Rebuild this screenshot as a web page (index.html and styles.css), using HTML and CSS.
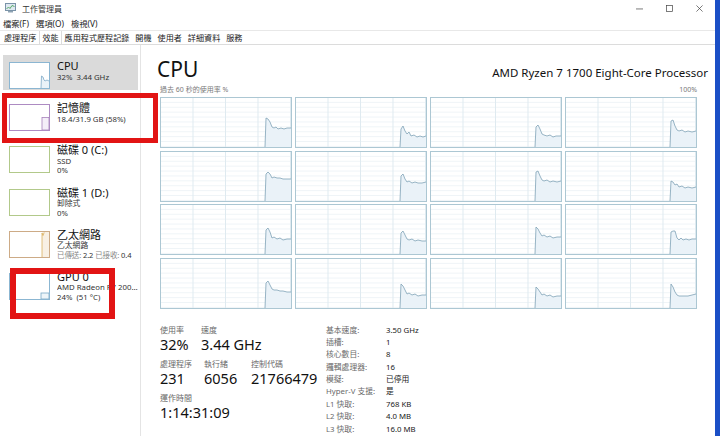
FILE: index.html
```html
<!DOCTYPE html>
<html lang="zh-Hant">
<head>
<meta charset="utf-8">
<title>工作管理員</title>
<link rel="stylesheet" href="styles.css">
</head>
<body>
<div class="screen">
  <div class="window">
    <div class="titlebar">
      <svg class="appicon" viewBox="0 0 11 10"><rect x="0.5" y="0.5" width="10" height="7" fill="#dfe9f1" stroke="#7a93a8"/><polyline points="1.5,6 3.5,4 5,5.5 7,2.5 9.5,3.5" fill="none" stroke="#4aa35a" stroke-width="0.9"/><rect x="3" y="8" width="5" height="1.5" fill="#8fa3b3"/></svg>
      <span class="title">工作管理員</span>
      <div class="controls">
        <svg viewBox="0 0 8 8"><line x1="0" y1="4.5" x2="8" y2="4.5" stroke="#444" stroke-width="0.8"/></svg>
        <svg viewBox="0 0 8 8"><rect x="0.5" y="0.5" width="7" height="7" fill="none" stroke="#444" stroke-width="0.8"/></svg>
        <svg viewBox="0 0 8 8"><path d="M0.5 0.5L7.5 7.5M7.5 0.5L0.5 7.5" stroke="#444" stroke-width="0.8"/></svg>
      </div>
    </div>
    <div class="menubar"><span>檔案(F)</span><span>選項(O)</span><span>檢視(V)</span></div>
    <div class="tabs">
      <span class="tab">處理程序</span>
      <span class="tab active">效能</span>
      <span class="tab">應用程式歷程記錄</span>
      <span class="tab">開機</span>
      <span class="tab">使用者</span>
      <span class="tab">詳細資料</span>
      <span class="tab">服務</span>
    </div>
    <div class="main">
      <aside class="sidebar">
        <div class="item sel">
          <div class="thumb t-cpu"><svg viewBox="0 0 39 25" preserveAspectRatio="none"><polygon points="31,25 31.5,13 33,14 34,17 35,18 37,17 39,18 39,25" fill="#e9f2f8"/><polyline points="31,25 31.5,13 33,14 34,17 35,18 37,17 39,18" fill="none" stroke="#6f9fc0" stroke-width="0.7"/></svg></div>
          <div class="itext"><div class="iname">CPU</div><div class="isub">32%&nbsp; 3.44 GHz</div></div>
        </div>
        <div class="item">
          <div class="thumb t-mem"><svg viewBox="0 0 39 25" preserveAspectRatio="none"><rect x="32" y="12.5" width="7" height="12.5" fill="#f4eef8" stroke="#a782bb" stroke-width="0.8"/></svg></div>
          <div class="itext"><div class="iname">記憶體</div><div class="isub">18.4/31.9 GB (58%)</div></div>
        </div>
        <div class="item">
          <div class="thumb t-disk"></div>
          <div class="itext"><div class="iname">磁碟 0 (C:)</div><div class="isub">SSD</div><div class="isub">0%</div></div>
        </div>
        <div class="item">
          <div class="thumb t-disk"></div>
          <div class="itext"><div class="iname">磁碟 1 (D:)</div><div class="isub">卸除式</div><div class="isub">0%</div></div>
        </div>
        <div class="item">
          <div class="thumb t-eth"><svg viewBox="0 0 39 25" preserveAspectRatio="none"><rect x="32" y="0" width="7" height="25" fill="#f8f0e4"/><polyline points="32,25 32,1 33,3.5 34.2,0.5" fill="none" stroke="#d6a64a" stroke-width="0.7"/></svg></div>
          <div class="itext"><div class="iname">乙太網路</div><div class="isub">乙太網路</div><div class="isub tight"><span class="muted">已傳送:</span> 2.2 <span class="muted">已接收:</span> 0.4</div></div>
        </div>
        <div class="item">
          <div class="thumb t-gpu"><svg viewBox="0 0 39 25" preserveAspectRatio="none"><rect x="31" y="19" width="8" height="6" fill="#eef5f9" stroke="#79a8c6" stroke-width="0.8"/></svg></div>
          <div class="itext"><div class="iname">GPU 0</div><div class="isub">AMD Radeon R7 200 Series</div><div class="isub">24%&nbsp; (51 °C)</div></div>
        </div>
      </aside>

      <section class="content">
        <div class="head">
          <h1>CPU</h1>
          <span class="model">AMD Ryzen 7 1700 Eight-Core Processor</span>
        </div>
        <div class="caption"><span>過去 60 秒的使用率 %</span><span>100%</span></div>
        <div class="grid">
          <div class="g"><svg viewBox="0 0 130 49"><polygon class="f" points="104,49 105,20 107,21 109,24 111,29 113,30 115,29 117,31 120,30 123,31 126,30 130,30 130,49"/><polyline class="l" points="104,49 105,20 107,21 109,24 111,29 113,30 115,29 117,31 120,30 123,31 126,30 130,30"/></svg></div>
          <div class="g"><svg viewBox="0 0 130 49"><polygon class="f" points="104,49 105,31 107,28 109,33 111,36 113,34 115,38 118,37 121,39 124,38 127,39 130,38 130,49"/><polyline class="l" points="104,49 105,31 107,28 109,33 111,36 113,34 115,38 118,37 121,39 124,38 127,39 130,38"/></svg></div>
          <div class="g"><svg viewBox="0 0 130 49"><polygon class="f" points="104,49 105,29 107,27 109,31 111,36 113,37 116,38 119,37 122,39 125,38 130,38 130,49"/><polyline class="l" points="104,49 105,29 107,27 109,31 111,36 113,37 116,38 119,37 122,39 125,38 130,38"/></svg></div>
          <div class="g"><svg viewBox="0 0 130 49"><polygon class="f" points="104,49 105,23 107,22 109,28 111,32 113,33 116,32 119,34 122,33 126,34 130,33 130,49"/><polyline class="l" points="104,49 105,23 107,22 109,28 111,32 113,33 116,32 119,34 122,33 126,34 130,33"/></svg></div>

          <div class="g"><svg viewBox="0 0 130 49"><polygon class="f" points="104,49 105,22 107,20 109,22 111,26 113,25 116,26 119,26 122,27 126,27 130,27 130,49"/><polyline class="l" points="104,49 105,22 107,20 109,22 111,26 113,25 116,26 119,26 122,27 126,27 130,27"/></svg></div>
          <div class="g"><svg viewBox="0 0 130 49"><polygon class="f" points="104,49 105,24 107,22 109,27 111,30 113,29 116,31 119,30 122,31 126,31 130,30 130,49"/><polyline class="l" points="104,49 105,24 107,22 109,27 111,30 113,29 116,31 119,30 122,31 126,31 130,30"/></svg></div>
          <div class="g"><svg viewBox="0 0 130 49"><polygon class="f" points="104,49 105,20 107,19 109,24 111,28 113,29 116,28 119,30 122,29 126,30 130,29 130,49"/><polyline class="l" points="104,49 105,20 107,19 109,24 111,28 113,29 116,28 119,30 122,29 126,30 130,29"/></svg></div>
          <div class="g"><svg viewBox="0 0 130 49"><polygon class="f" points="104,49 105,29 107,30 109,33 111,32 113,35 116,34 119,36 122,35 126,36 130,35 130,49"/><polyline class="l" points="104,49 105,29 107,30 109,33 111,32 113,35 116,34 119,36 122,35 126,36 130,35"/></svg></div>

          <div class="g"><svg viewBox="0 0 130 49"><polygon class="f" points="104,49 105,25 107,23 109,27 111,33 113,32 116,34 119,33 122,35 126,34 130,34 130,49"/><polyline class="l" points="104,49 105,25 107,23 109,27 111,33 113,32 116,34 119,33 122,35 126,34 130,34"/></svg></div>
          <div class="g"><svg viewBox="0 0 130 49"><polygon class="f" points="104,49 105,28 107,26 109,30 111,34 113,35 116,34 119,36 122,35 126,36 130,36 130,49"/><polyline class="l" points="104,49 105,28 107,26 109,30 111,34 113,35 116,34 119,36 122,35 126,36 130,36"/></svg></div>
          <div class="g"><svg viewBox="0 0 130 49"><polygon class="f" points="104,49 105,22 107,24 109,28 111,31 113,30 116,32 119,31 122,33 126,32 130,32 130,49"/><polyline class="l" points="104,49 105,22 107,24 109,28 111,31 113,30 116,32 119,31 122,33 126,32 130,32"/></svg></div>
          <div class="g"><svg viewBox="0 0 130 49"><polygon class="f" points="104,49 105,27 107,26 109,26 111,33 113,35 115,33 117,35 120,34 123,35 126,34 130,34 130,49"/><polyline class="l" points="104,49 105,27 107,26 109,26 111,33 113,35 115,33 117,35 120,34 123,35 126,34 130,34"/></svg></div>

          <div class="g"><svg viewBox="0 0 130 49"><polygon class="f" points="104,49 105,24 107,22 109,26 111,30 113,31 116,31 119,32 122,32 126,33 130,33 130,49"/><polyline class="l" points="104,49 105,24 107,22 109,26 111,30 113,31 116,31 119,32 122,32 126,33 130,33"/></svg></div>
          <div class="g"><svg viewBox="0 0 130 49"><polygon class="f" points="104,49 105,25 107,27 109,31 111,35 113,34 116,36 119,35 122,37 126,36 130,36 130,49"/><polyline class="l" points="104,49 105,25 107,27 109,31 111,35 113,34 116,36 119,35 122,37 126,36 130,36"/></svg></div>
          <div class="g"><svg viewBox="0 0 130 49"><polygon class="f" points="104,49 105,28 107,30 109,33 111,36 113,35 116,37 119,36 122,38 126,37 130,37 130,49"/><polyline class="l" points="104,49 105,28 107,30 109,33 111,36 113,35 116,37 119,36 122,38 126,37 130,37"/></svg></div>
          <div class="g"><svg viewBox="0 0 130 49"><polygon class="f" points="104,49 105,25 107,28 109,33 111,36 113,37 116,37 119,37 122,37 126,36 130,35 130,49"/><polyline class="l" points="104,49 105,25 107,28 109,33 111,36 113,37 116,37 119,37 122,37 126,36 130,35"/></svg></div>
        </div>

        <div class="stats">
          <div class="left">
            <div class="srow">
              <div class="stat w41"><div class="lab">使用率</div><div class="val">32%</div></div>
              <div class="stat"><div class="lab">速度</div><div class="val">3.44 GHz</div></div>
            </div>
            <div class="srow">
              <div class="stat w44"><div class="lab">處理程序</div><div class="val">231</div></div>
              <div class="stat w47"><div class="lab">執行緒</div><div class="val">6056</div></div>
              <div class="stat"><div class="lab">控制代碼</div><div class="val">21766479</div></div>
            </div>
            <div class="srow">
              <div class="stat"><div class="lab">運作時間</div><div class="val">1:14:31:09</div></div>
            </div>
          </div>
          <dl class="specs">
            <dt>基本速度:</dt><dd>3.50 GHz</dd>
            <dt>插槽:</dt><dd>1</dd>
            <dt>核心數目:</dt><dd>8</dd>
            <dt>邏輯處理器:</dt><dd>16</dd>
            <dt>模擬:</dt><dd>已停用</dd>
            <dt>Hyper-V 支援:</dt><dd>是</dd>
            <dt>L1 快取:</dt><dd>768 KB</dd>
            <dt>L2 快取:</dt><dd>4.0 MB</dd>
            <dt>L3 快取:</dt><dd>16.0 MB</dd>
          </dl>
        </div>
      </section>
    </div>

    <div class="mark mark-mem"></div>
    <div class="mark mark-gpu"></div>
  </div>
  <div class="edge"></div>
</div>
</body>
</html>
```

FILE: styles.css
```css
* { box-sizing: border-box; margin: 0; padding: 0; }

html, body {
  width: 720px;
  height: 436px;
  overflow: hidden;
  background: #fff;
}

body {
  font-family: "Noto Sans", "Noto Sans CJK TC", sans-serif;
  color: #1a1a1a;
}

.screen {
  display: flex;
  width: 720px;
  height: 436px;
}

.window {
  position: relative;
  width: 715px;
  height: 436px;
  display: flex;
  flex-direction: column;
  background: #fff;
}

.edge {
  width: 5px;
  background: #1b4fc6;
}

/* title bar */
.titlebar {
  height: 16px;
  display: flex;
  align-items: center;
  padding-left: 5px;
}

.appicon { width: 11px; height: 10px; margin-right: 6px; }

.title { font-size: 8px; color: #333; }

.controls {
  margin-left: auto;
  display: flex;
  align-items: center;
  gap: 23px;
  padding-right: 12px;
}

.controls svg { width: 7px; height: 7px; display: block; }

/* menu */
.menubar {
  height: 14px;
  display: flex;
  align-items: center;
  gap: 7px;
  padding-left: 3px;
  font-size: 8.3px;
  color: #222;
}

/* tabs */
.tabs {
  height: 15px;
  display: flex;
  align-items: stretch;
  padding-left: 1px;
  border-top: 1px solid #e8e8e8;
  border-bottom: 1px solid #dcdcdc;
  font-size: 8.1px;
  color: #222;
}

.tab {
  display: flex;
  align-items: center;
  padding: 0 2px;
  border-left: 1px solid transparent;
  border-right: 1px solid transparent;
}

.tab.active {
  border-left-color: #dcdcdc;
  border-right-color: #dcdcdc;
  background: #fff;
}

/* main */
.main {
  flex: 1;
  display: flex;
  min-height: 0;
}

.sidebar {
  width: 141px;
  flex: none;
  border-right: 1px solid #e4e4e4;
  padding: 10px 2px 0 3px;
  display: flex;
  flex-direction: column;
  gap: 7.2px;
}

.item {
  height: 35px;
  display: flex;
  gap: 7px;
  padding-left: 6px;
  flex: none;
}

.item.sel { background: #dadada; }

.thumb {
  width: 41px;
  height: 27px;
  margin-top: 7px;
  flex: none;
  border: 1px solid #8bb8d5;
  background: #fff;
}

.thumb svg { display: block; width: 39px; height: 25px; }

.t-cpu, .t-gpu { border-color: #8bb6d2; }
.t-mem { border-color: #ad8bc2; }
.t-disk { border-color: #b2c98a; }
.t-eth { border-color: #cdab86; }

.itext {
  padding-top: 5px;
  min-width: 0;
  flex: 1;
}

.iname {
  font-size: 11px;
  line-height: 12px;
  margin-bottom: 0.5px;
  color: #111;
  white-space: nowrap;
}

.isub {
  font-size: 7.8px;
  line-height: 9.5px;
  color: #333;
  white-space: nowrap;
  overflow: hidden;
  text-overflow: ellipsis;
}

.isub.tight {
  font-size: 7.5px;
  letter-spacing: -0.1px;
  text-overflow: clip;
}

.muted { color: #888; }

/* content */
.content {
  flex: 1;
  min-width: 0;
  padding: 12px 18px 0 19px;
  display: flex;
  flex-direction: column;
}

.head {
  display: flex;
  align-items: baseline;
  justify-content: space-between;
  margin-left: -3px;
  margin-right: -11px;
}

.head h1 {
  font-size: 21px;
  font-weight: 400;
  line-height: 24px;
  color: #111;
}

.model { font-size: 11.5px; color: #111; }

.caption {
  display: flex;
  justify-content: space-between;
  margin-top: 4px;
  font-size: 7px;
  line-height: 10px;
  color: #7a7a7a;
}

.grid {
  display: grid;
  grid-template-columns: repeat(4, 132px);
  grid-template-rows: repeat(4, 51px);
  column-gap: 3px;
  row-gap: 2.5px;
  margin-top: 2px;
}

.g {
  border: 1px solid #acc7d3;
  background-color: #fff;
  background-image:
    linear-gradient(to right, #dfeaf0 1px, transparent 1px),
    linear-gradient(to bottom, #eff4f7 1px, transparent 1px);
  background-size: 32.5px 100%, 100% 4.9px;
  background-position: -1px 0, 0 -1px;
}

.g svg { display: block; width: 130px; height: 49px; }
.g .f { fill: #eaf2f8; }
.g .l { fill: none; stroke: #7fa2b6; stroke-width: 0.8; }

/* stats */
.stats {
  display: flex;
  margin-top: 15px;
}

.left { width: 166px; flex: none; }

.srow {
  display: flex;
  margin-bottom: 4px;
}

.w41 { width: 41px; }
.w44 { width: 44px; }
.w47 { width: 47px; }

.lab {
  font-size: 8px;
  line-height: 11px;
  color: #6a6a6a;
}

.val {
  font-size: 14.5px;
  line-height: 19px;
  color: #111;
  white-space: nowrap;
}

.specs {
  display: grid;
  grid-template-columns: 60px auto;
  grid-auto-rows: 12.4px;
  font-size: 7.8px;
  line-height: 12.4px;
}

.specs dt { color: #6a6a6a; white-space: nowrap; }
.specs dd { color: #222; white-space: nowrap; }

/* annotation boxes drawn over the screenshot */
.mark {
  position: absolute;
  border: 5px solid #e21414;
  pointer-events: none;
}

.mark-mem { left: 2px; top: 93px; width: 156px; height: 50px; }
.mark-gpu { left: 10px; top: 268px; width: 105px; height: 51px; border-width: 6px; }
```
